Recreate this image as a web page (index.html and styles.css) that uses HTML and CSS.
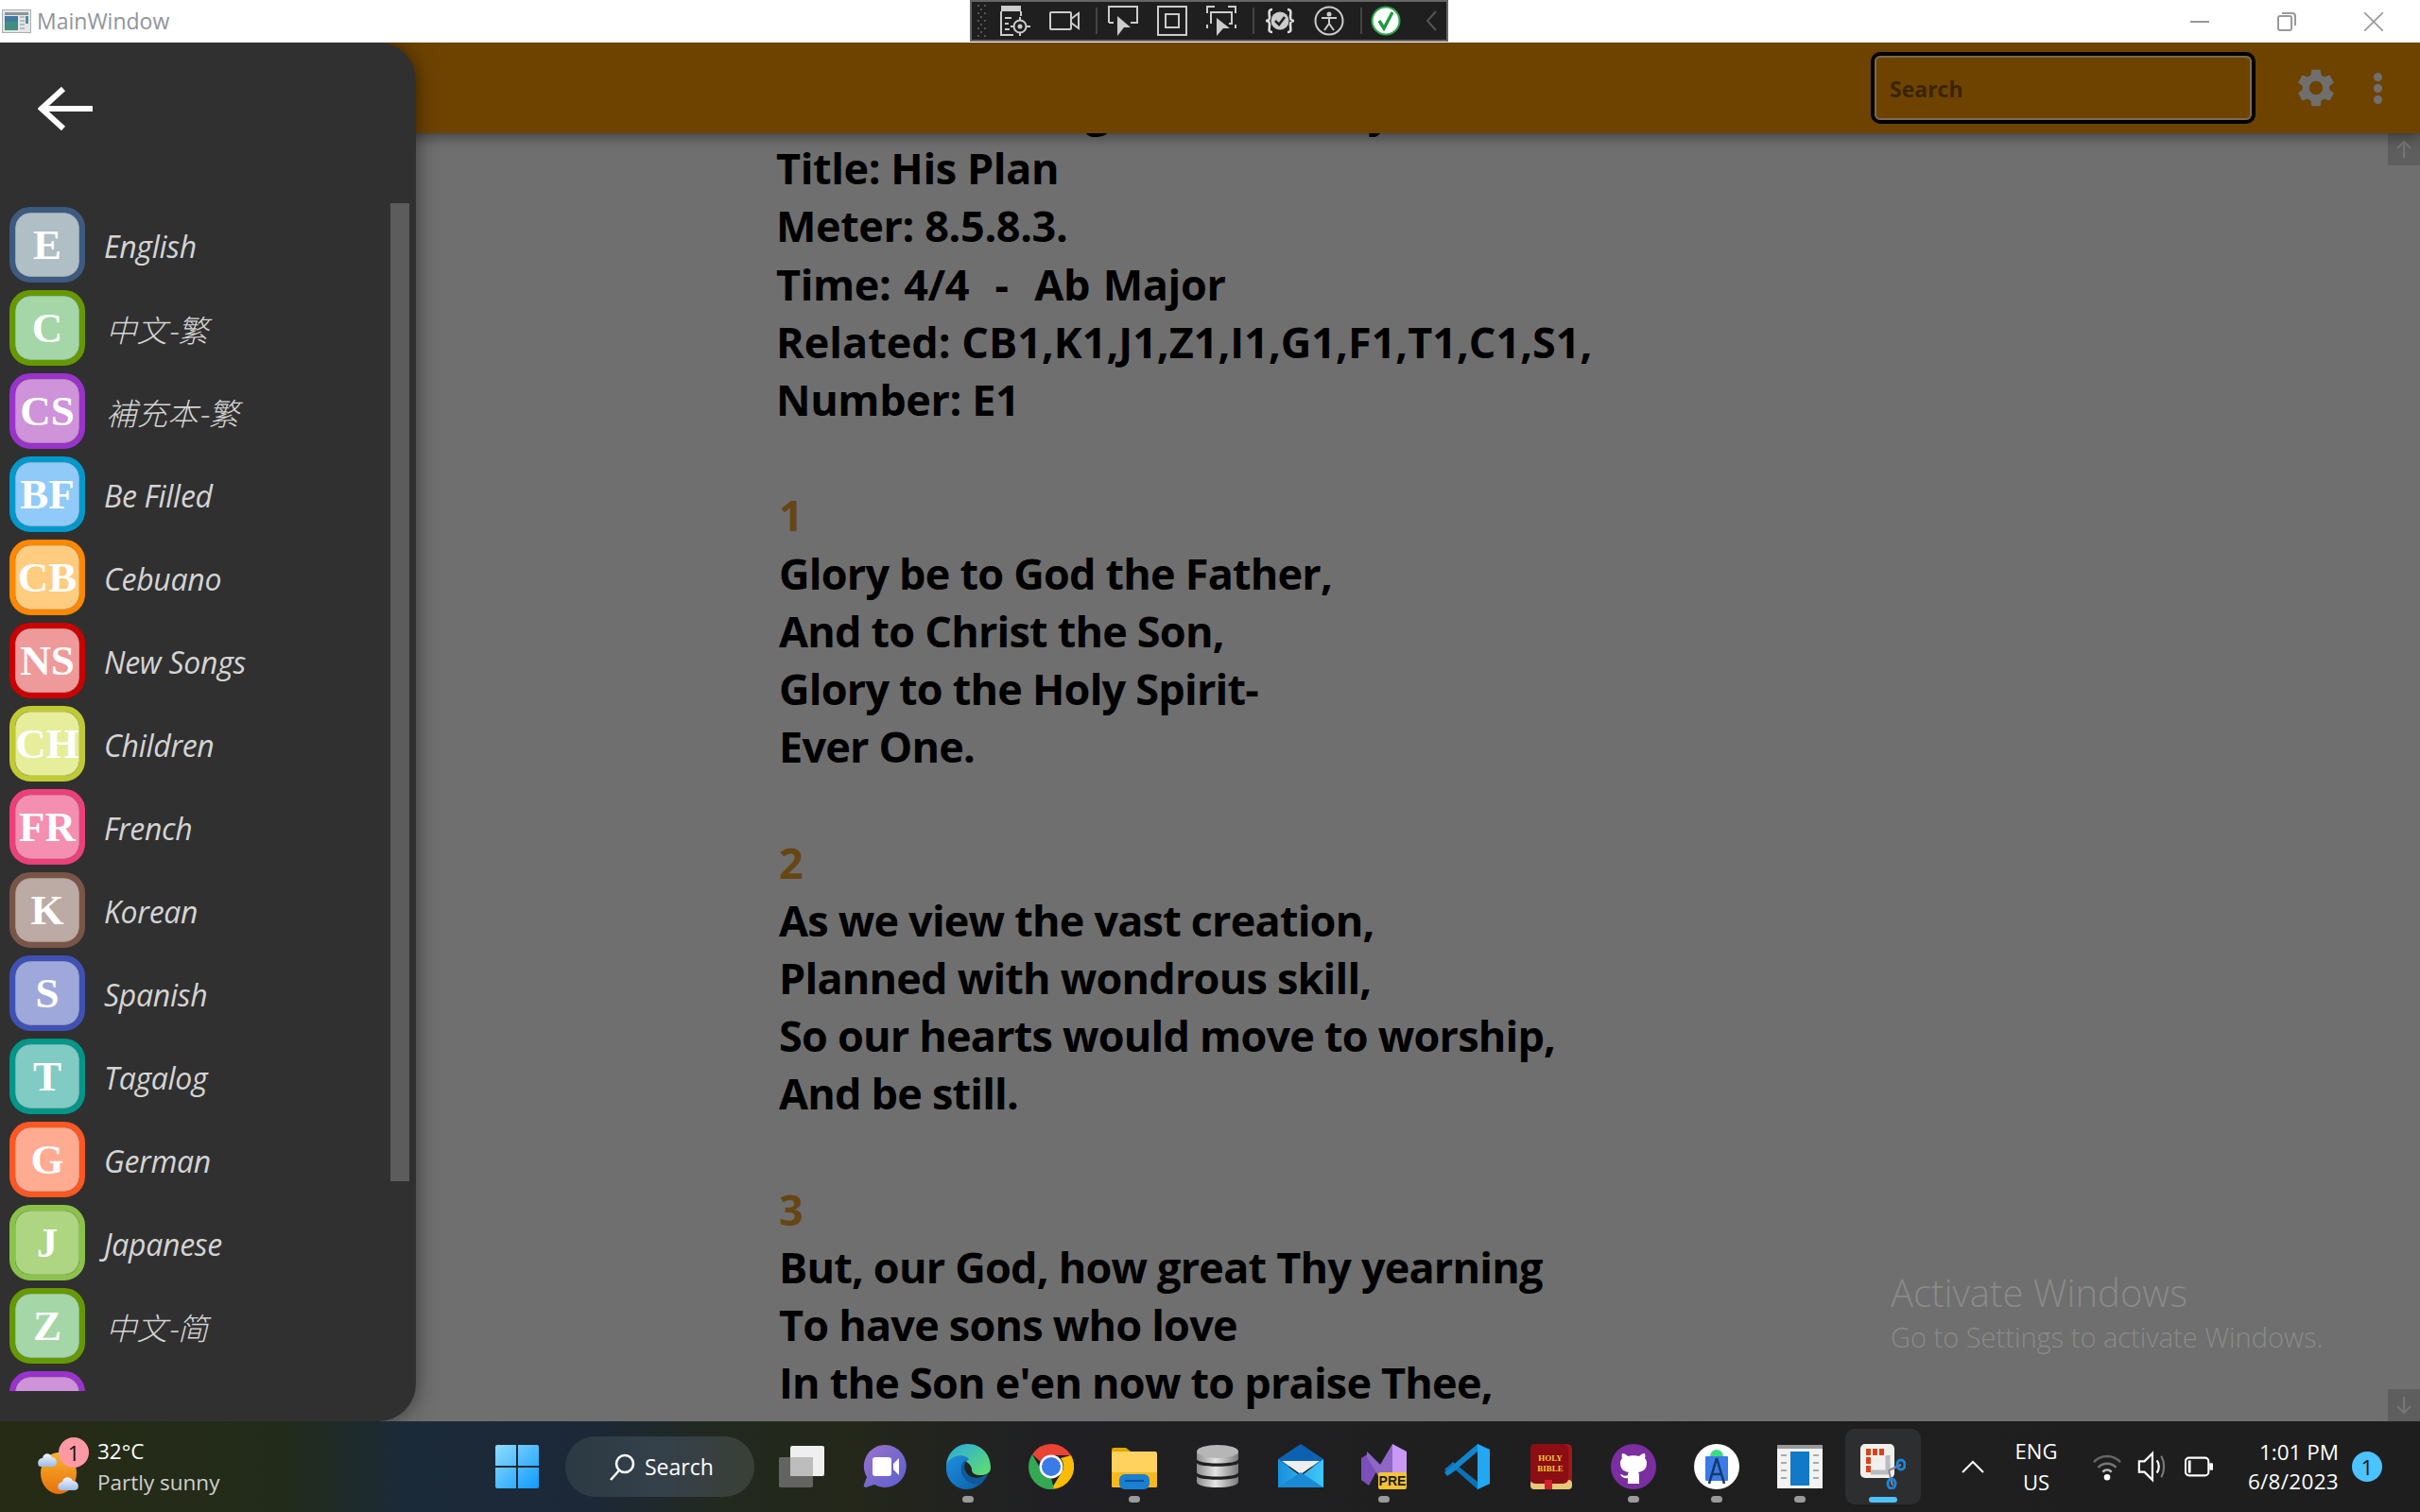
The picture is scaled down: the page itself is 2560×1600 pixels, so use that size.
FILE: index.html
```html
<!DOCTYPE html>
<html lang="en">
<head>
<meta charset="utf-8">
<title>MainWindow</title>
<link rel="stylesheet" href="styles.css">
</head>
<body>
<div class="screen">
  <div class="titlebar">
    <svg class="app-ic" viewBox="0 0 31 25"><rect x=".5" y=".5" width="30" height="24" fill="#e4e6e8" stroke="#a9adb0"/><rect x="3" y="3" width="25" height="3" fill="#8d9499"/><rect x="3" y="7" width="14" height="15" fill="#3f8f7f"/><rect x="3" y="7" width="14" height="6" fill="#3f7aa0"/><rect x="19" y="7" width="5" height="2" fill="#b5bbbf"/><rect x="19" y="11" width="5" height="2" fill="#b5bbbf"/><rect x="19" y="15" width="5" height="2" fill="#b5bbbf"/><rect x="19" y="19" width="5" height="2" fill="#b5bbbf"/><rect x="25" y="7" width="3" height="8" fill="#4f8f8f"/></svg>
    <span class="win-title">MainWindow</span>
    <div class="devbar">
      <svg class="grip" viewBox="0 0 10 34"><g fill="#555"><rect x="0" y="0" width="2" height="2"/><rect x="7" y="0" width="2" height="2"/><rect x="3" y="4" width="2" height="2"/><rect x="0" y="8" width="2" height="2"/><rect x="7" y="8" width="2" height="2"/><rect x="3" y="12" width="2" height="2"/><rect x="0" y="16" width="2" height="2"/><rect x="7" y="16" width="2" height="2"/><rect x="3" y="20" width="2" height="2"/><rect x="0" y="24" width="2" height="2"/><rect x="7" y="24" width="2" height="2"/><rect x="3" y="28" width="2" height="2"/><rect x="0" y="32" width="2" height="2"/><rect x="7" y="32" width="2" height="2"/></g></svg>
      <svg class="tool" viewBox="0 0 32 32" fill="none" stroke="#ccc" stroke-width="2"><rect x="1" y="0" width="21" height="6" fill="#ccc" stroke="none"/><path d="M1 6V31H14M22 6V11"/><path d="M5 13H12M5 19H9M5 25H10"/><circle cx="21" cy="22" r="6.5"/><circle cx="21" cy="22" r="1.5" fill="#ccc"/><path d="M21 12V16M21 28V32M11 22H15M27 22H32"/></svg>
      <svg class="tool" viewBox="0 0 32 32" fill="none" stroke="#ccc" stroke-width="2"><rect x="1" y="7" width="22" height="18" rx="1"/><path d="M23 14L31 8V24L23 18"/></svg>
      <span class="tool-sep"></span>
      <svg class="tool" viewBox="0 0 32 32" fill="none" stroke="#ccc" stroke-width="2"><path d="M1 18V1H31V18H24M1 18H6"/><path d="M10 11L24 23L17 23L10 32Z" fill="#ccc" stroke="none"/></svg>
      <svg class="tool" viewBox="0 0 32 32" fill="none" stroke="#ccc" stroke-width="2"><rect x="1" y="1" width="30" height="30"/><rect x="9" y="9" width="14" height="14"/></svg>
      <svg class="tool" viewBox="0 0 32 32" fill="none" stroke="#ccc" stroke-width="2"><path d="M1 8V1H9M23 1H31V8M1 24V20M31 20V24"/><path d="M5 19V7H27V19H24"/><path d="M11 13L25 24L18 24L11 32Z" fill="#ccc" stroke="none"/></svg>
      <span class="tool-sep"></span>
      <svg class="tool" viewBox="0 0 32 32" fill="none" stroke="#ddd" stroke-width="2.6"><path d="M8 4C3 4 5 9 5 12C5 15 4 16 1 16C4 16 5 17 5 20C5 25 3 28 8 28M24 4C29 4 27 9 27 12C27 15 28 16 31 16C28 16 27 17 27 20C27 25 29 28 24 28"/><circle cx="16" cy="16" r="9.500" fill="#ccc" stroke="none"/><path d="M11 16L15 20L21 12" stroke="#222"/></svg>
      <svg class="tool" viewBox="0 0 32 32" fill="none" stroke="#ccc" stroke-width="2"><circle cx="16" cy="16" r="14.5"/><circle cx="16" cy="9" r="2.5" fill="#ccc" stroke="none"/><path d="M8 13H24M16 13V19L11 26M16 19L21 26"/></svg>
      <span class="tool-sep tool-sep-tight"></span>
      <svg class="tool" viewBox="0 0 32 32" fill="none"><circle cx="16" cy="16" r="14.5" fill="#fff" stroke="#2aa84a" stroke-width="2"/><path d="M9 16L14 24L23 7" stroke="#1f9a3e" stroke-width="3.4"/></svg>
      <svg class="tool-back" viewBox="0 0 12 22" fill="none" stroke="#555" stroke-width="2"><path d="M11 1L2 11L11 21"/></svg>
    </div>
    <div class="win-controls">
      <span class="win-btn"><svg viewBox="0 0 20 20" stroke="#999" stroke-width="2" fill="none"><path d="M0 10H20"/></svg></span>
      <span class="win-btn"><svg viewBox="0 0 20 20" stroke="#999" stroke-width="2" fill="none"><rect x="1" y="4" width="14" height="15" rx="2"/><path d="M5 1H16C18 1 19 2 19 4V14"/></svg></span>
      <span class="win-btn"><svg viewBox="0 0 20 20" stroke="#999" stroke-width="1.6" fill="none"><path d="M0 0L20 20M20 0L0 20"/></svg></span>
    </div>
  </div>

  <div class="app">
    <header class="appbar">
      <div class="search-outer"><div class="search-inner">Search</div></div>
      <svg class="gear" viewBox="0 0 24 24" fill="#6f6f6f"><path d="M19.14 12.94c.04-.3.06-.61.06-.94 0-.32-.02-.64-.07-.94l2.03-1.58c.18-.14.23-.41.12-.61l-1.92-3.32c-.12-.22-.37-.29-.59-.22l-2.39.96c-.5-.38-1.03-.7-1.62-.94l-.36-2.54c-.04-.24-.24-.41-.48-.41h-3.84c-.24 0-.43.17-.47.41l-.36 2.54c-.59.24-1.13.57-1.62.94l-2.39-.96c-.22-.08-.47 0-.59.22L2.74 8.87c-.12.21-.08.47.12.61l2.03 1.58c-.05.3-.09.63-.09.94s.02.64.07.94l-2.03 1.58c-.18.14-.23.41-.12.61l1.92 3.32c.12.22.37.29.59.22l2.39-.96c.5.38 1.03.7 1.62.94l.36 2.54c.05.24.24.41.48.41h3.84c.24 0 .44-.17.47-.41l.36-2.54c.59-.24 1.13-.56 1.62-.94l2.39.96c.22.08.47 0 .59-.22l1.92-3.32c.12-.22.07-.47-.12-.61l-2.01-1.58zM12 15.6c-1.98 0-3.6-1.62-3.6-3.6s1.62-3.6 3.6-3.6 3.6 1.62 3.6 3.6-1.62 3.6-3.6 3.6z"/></svg>
      <div class="kebab"><i></i><i></i><i></i></div>
    </header>

    <div class="reader">
      <div class="page">
        <div class="meta">
          <p>Theme: Praising of the Trinity</p>
          <p>Title: His Plan</p>
          <p>Meter: 8.5.8.3.</p>
          <p class="meta-key">Time: 4/4&nbsp; -&nbsp; Ab Major</p>
          <p class="meta-wide">Related: CB1,K1,J1,Z1,I1,G1,F1,T1,C1,S1,</p>
          <p>Number: E1</p>
        </div>
        <div class="verse">
          <p class="vnum">1</p>
          <p>Glory be to God the Father,</p>
          <p>And to Christ the Son,</p>
          <p>Glory to the Holy Spirit-</p>
          <p>Ever One.</p>
        </div>
        <div class="verse">
          <p class="vnum">2</p>
          <p>As we view the vast creation,</p>
          <p>Planned with wondrous skill,</p>
          <p>So our hearts would move to worship,</p>
          <p>And be still.</p>
        </div>
        <div class="verse">
          <p class="vnum">3</p>
          <p>But, our God, how great Thy yearning</p>
          <p>To have sons who love</p>
          <p>In the Son e'en now to praise Thee,</p>
        </div>
      </div>
      <div class="vscroll">
        <span class="vbtn"><svg viewBox="0 0 20 20" fill="none" stroke="#767676" stroke-width="2"><path d="M10 19V2M3 9L10 2L17 9"/></svg></span>
        <span class="vbtn"><svg viewBox="0 0 20 20" fill="none" stroke="#767676" stroke-width="2"><path d="M10 1V18M3 11L10 18L17 11"/></svg></span>
      </div>
    </div>

    <div class="activate">
      <div class="activate-h">Activate Windows</div>
      <div class="activate-s">Go to Settings to activate Windows.</div>
    </div>

    <aside class="drawer">
      <div class="drawer-top">
        <svg class="back" viewBox="0 0 58 46" fill="none" stroke="#fff" stroke-width="6"><path d="M58 23H5M27 2L4 23L27 44"/></svg>
      </div>
      <div class="drawer-body">
        <ul class="books">
          <li class="book"><span class="badge b-slate">E</span><span class="book-name">English</span></li>
          <li class="book"><span class="badge b-green">C</span><span class="book-name cjk" lang="zh-Hant">中文-繁</span></li>
          <li class="book"><span class="badge b-purple">CS</span><span class="book-name cjk" lang="zh-Hant">補充本-繁</span></li>
          <li class="book"><span class="badge b-blue">BF</span><span class="book-name">Be Filled</span></li>
          <li class="book"><span class="badge b-orange">CB</span><span class="book-name">Cebuano</span></li>
          <li class="book"><span class="badge b-red">NS</span><span class="book-name">New Songs</span></li>
          <li class="book"><span class="badge b-lime">CH</span><span class="book-name">Children</span></li>
          <li class="book"><span class="badge b-pink">FR</span><span class="book-name">French</span></li>
          <li class="book"><span class="badge b-brown">K</span><span class="book-name">Korean</span></li>
          <li class="book"><span class="badge b-indigo">S</span><span class="book-name">Spanish</span></li>
          <li class="book"><span class="badge b-teal">T</span><span class="book-name">Tagalog</span></li>
          <li class="book"><span class="badge b-deep">G</span><span class="book-name">German</span></li>
          <li class="book"><span class="badge b-light">J</span><span class="book-name">Japanese</span></li>
          <li class="book"><span class="badge b-green">Z</span><span class="book-name cjk" lang="zh-Hans">中文-简</span></li>
          <li class="book"><span class="badge b-purple"></span></li>
        </ul>
        <div class="thumb"></div>
      </div>
    </aside>
  </div>

  <footer class="taskbar">
    <div class="weather">
      <div class="w-icon">
        <svg viewBox="0 0 46 50"><defs><linearGradient id="sun" x1="0" y1="0" x2="0" y2="1"><stop offset="0" stop-color="#f6b42a"/><stop offset="1" stop-color="#e8700f"/></linearGradient><linearGradient id="cl" x1="0" y1="0" x2="0" y2="1"><stop offset="0" stop-color="#f2f6ff"/><stop offset="1" stop-color="#9dbbe8"/></linearGradient></defs><ellipse cx="22" cy="28" rx="19" ry="22" fill="url(#sun)"/><path d="M3 21C-1 21-1 12 5 12C6 6 13 6 15 11C21 11 22 21 16 21Z" fill="url(#cl)"/><path d="M25 46C20 46 20 38 26 37C27 31 35 31 37 36C44 36 45 46 39 46Z" fill="url(#cl)"/></svg>
        <span class="w-badge">1</span>
      </div>
      <div class="w-text"><span class="w-temp">32°C</span><span class="w-desc">Partly sunny</span></div>
    </div>
    <svg class="start" viewBox="0 0 46 46"><defs><linearGradient id="win" x1="0" y1="0" x2="1" y2="1"><stop offset="0" stop-color="#8fdcff"/><stop offset="1" stop-color="#0f9bff"/></linearGradient></defs><path fill="url(#win)" d="M2 0H22V22H0V2Q0 0 2 0ZM24 0H44Q46 0 46 2V22H24ZM0 24H22V46H2Q0 46 0 44ZM24 24H46V44Q46 46 44 46H24Z"/></svg>
    <div class="task-search">
      <svg viewBox="0 0 28 30" fill="none" stroke="#fff" stroke-width="2.6"><circle cx="17" cy="12" r="9"/><path d="M11 19L2 29"/></svg>
      <span>Search</span>
    </div>
    <div class="tasks">
      <div class="task"><svg class="t-ic" viewBox="0 0 48 48"><rect x="12" y="2" width="36" height="32" rx="2" fill="#efefef"/><rect x="0" y="14" width="36" height="32" rx="2" fill="#6a6a6a" opacity=".9"/><rect x="12" y="14" width="24" height="20" fill="#bdbdbd"/></svg></div>
      <div class="task"><svg class="t-ic" viewBox="0 0 48 48"><defs><linearGradient id="teams" x1="0" y1="0" x2="1" y2="1"><stop offset="0" stop-color="#9a73c9"/><stop offset="1" stop-color="#5a5fd0"/></linearGradient></defs><path fill="url(#teams)" d="M24 1A22.500 22.500 0 1 1 13 43L4 46Q1 46 2 43L5 35A22.500 22.500 0 0 1 24 1Z"/><rect x="11" y="14" width="20" height="20" rx="3" fill="#fff"/><path d="M33 21L39 15V33L33 27Z" fill="#fff"/></svg></div>
      <div class="task"><svg class="t-ic" viewBox="0 0 48 48"><defs><linearGradient id="edge1" x1="0" y1="0" x2="1" y2="1"><stop offset="0" stop-color="#2aa8e0"/><stop offset="1" stop-color="#62e06a"/></linearGradient><linearGradient id="edge2" x1="0" y1="0" x2="1" y2="1"><stop offset="0" stop-color="#1f8fe0"/><stop offset="1" stop-color="#0b5fa8"/></linearGradient></defs><path fill="url(#edge1)" d="M1 24C1 10 12 0 24 0C38 0 48 11 48 25C48 31 43 33 38 33C31 33 28 31 28 27C28 21 18 14 9 17C5 18 2 21 1 24Z"/><path fill="url(#edge2)" d="M1 24C2 14 18 8 25 16C20 17 16 22 17 28C18 37 28 44 38 42C31 47 26 48 22 48C10 48 0 37 1 24Z"/><path fill="#0f5a9e" d="M25 16C21 18 19 23 21 28C24 35 31 37 38 35C41 34 44 32 46 30C44 35 41 39 38 42C28 44 18 37 17 28C16 22 20 17 25 16Z"/></svg><span class="dot"></span></div>
      <div class="task"><svg class="t-ic" viewBox="0 0 48 48"><path fill="#ea4335" d="M24 0A24 24 0 0 1 45 12H24A12 12 0 0 0 13 19L4 11A24 24 0 0 1 24 0Z"/><path fill="#fbbc05" d="M45 12A24 24 0 0 1 24 48L35 30A12 12 0 0 0 34 15Z"/><path fill="#34a853" d="M4 11L13 27A12 12 0 0 0 24 36L27 48A24 24 0 0 1 4 11Z"/><circle cx="24" cy="24" r="12.500" fill="#fff"/><circle cx="24" cy="24" r="10" fill="#3b7be8"/></svg></div>
      <div class="task"><svg class="t-ic" viewBox="0 0 48 48"><path fill="#e0a800" d="M0 6Q0 4 2 4H15L20 8H40V16H0Z"/><rect x="0" y="8" width="48" height="38" rx="2" fill="#fdd25e"/><path fill="#f5b91f" d="M0 30H48V44Q48 46 46 46H2Q0 46 0 44Z"/><rect x="8" y="32" width="32" height="16" rx="6" fill="#1a7fd0"/><rect x="14" y="38" width="20" height="2" fill="#0b4f90"/></svg><span class="dot"></span></div>
      <div class="task"><svg class="t-ic" viewBox="0 0 48 48"><defs><linearGradient id="db" x1="0" y1="0" x2="1" y2="0"><stop offset="0" stop-color="#8e8e8e"/><stop offset=".45" stop-color="#e4e4e4"/><stop offset="1" stop-color="#7a7a7a"/></linearGradient></defs><path fill="url(#db)" d="M2 8V16C2 22 46 22 46 16V8ZM2 20V30C2 36 46 36 46 30V20C46 25 2 25 2 20ZM2 34V40C2 48 46 48 46 40V34C46 39 2 39 2 34Z"/><ellipse cx="24" cy="8" rx="22" ry="7" fill="#b6b6b6"/></svg></div>
      <div class="task"><svg class="t-ic" viewBox="0 0 48 48"><defs><linearGradient id="m1" x1="0" y1="0" x2="1" y2="0"><stop offset="0" stop-color="#1a8fdc"/><stop offset="1" stop-color="#3fc8f8"/></linearGradient></defs><path fill="#0c62b0" d="M0 16L24 0L48 16V24H0Z"/><path fill="#eee" d="M4 18H44L24 32Z"/><path fill="url(#m1)" d="M0 16L24 34L48 16V46H0Z"/><path fill="#1a8ad6" d="M0 46L24 30L48 46Z"/></svg></div>
      <div class="task"><svg class="t-ic" viewBox="0 0 48 48"><path fill="#7b4fb8" d="M0 15L8 10L20 22L8 44L0 38Z"/><path fill="#8d66c6" d="M6 8L20 22L33 0V34L24 44L6 14Z"/><path fill="#c99af5" d="M33 0L48 8V38L33 44Z"/><rect x="18" y="30" width="30" height="18" rx="2" fill="#f5c430"/><text x="33" y="44" class="pre">PRE</text></svg><span class="dot"></span></div>
      <div class="task"><svg class="t-ic" viewBox="0 0 48 48"><path fill="#0a72b8" d="M35 0L48 6V42L35 48L9 25L3 30L0 27L9 19L35 40Z"/><path fill="#0f85cf" d="M35 0V8L9 30L3 34L0 30Z"/><path fill="#22a7f0" d="M35 0L48 6V42L35 48Z"/></svg></div>
      <div class="task"><svg class="t-ic" viewBox="0 0 48 48"><rect x="3" y="0" width="44" height="44" rx="5" fill="#a01818"/><rect x="3" y="38" width="44" height="10" rx="4" fill="#e8c878"/><rect x="3" y="0" width="40" height="42" rx="5" fill="#8c0d14"/><text x="24" y="18" class="bible">HOLY</text><text x="24" y="29" class="bible">BIBLE</text><rect x="18" y="38" width="8" height="10" fill="#d02030"/></svg></div>
      <div class="task"><svg class="t-ic" viewBox="0 0 48 48"><circle cx="24" cy="24" r="24" fill="#7a2ea0"/><path fill="#fff" d="M18 42V36C13 37 11 34 10 32C12 32 14 35 18 33C18 32 18 31 19 30C13 29 10 26 10 20C10 18 11 16 12 15C11 13 12 11 12 10C15 10 17 12 18 13C21 12 27 12 30 13C31 12 33 10 36 10C36 11 37 13 36 15C37 16 38 18 38 20C38 26 35 29 29 30C30 31 30 33 30 34V42Z"/></svg><span class="dot"></span></div>
      <div class="task"><svg class="t-ic" viewBox="0 0 48 48"><circle cx="24" cy="24" r="24" fill="#fff"/><rect x="12" y="13" width="24" height="26" rx="1" fill="#3b7be8"/><path d="M17 13A7 7 0 0 1 31 13Z" fill="#3ddc84"/><path d="M24 15L16 42M24 15L32 42M18 32H30" stroke="#173a6a" stroke-width="2.6" fill="none"/></svg><span class="dot"></span></div>
      <div class="task"><svg class="t-ic" viewBox="0 0 48 48"><rect x="0" y="1" width="48" height="46" fill="#f2f2f2"/><rect x="0" y="1" width="48" height="4" fill="#9a9a9a"/><rect x="14" y="8" width="20" height="36" fill="#1278c8"/><path d="M4 12H10M4 20H10M4 28H10M4 36H10M38 12H44M38 20H44M38 28H44M38 36H44" stroke="#aaa" stroke-width="2"/></svg><span class="dot"></span></div>
      <div class="task task-on"><svg class="t-ic" viewBox="0 0 48 48"><rect x="0" y="0" width="36" height="36" rx="5" fill="#f2f0ec"/><path d="M6 5H11V12H6ZM13 5H18V12H13ZM20 5H25V12H20ZM6 14H11V21H6ZM6 23H11V30H6Z" fill="#d8431c"/><path d="M29 12V30H11" fill="none" stroke="#b8bcc0" stroke-width="5"/><path d="M30 28L43 22M30 28L34 44" stroke="#889" stroke-width="2" fill="none"/><ellipse cx="43" cy="22" rx="4" ry="5" fill="none" stroke="#1b86d8" stroke-width="3"/><ellipse cx="33" cy="42" rx="4" ry="5" fill="none" stroke="#1b86d8" stroke-width="3"/></svg><span class="dot-on"></span></div>
    </div>
    <div class="tray">
      <svg class="chev" viewBox="0 0 24 14" fill="none" stroke="#fff" stroke-width="2"><path d="M1 13L12 2L23 13"/></svg>
      <div class="lang"><span>ENG</span><span>US</span></div>
      <svg class="wifi" viewBox="0 0 32 34" fill="none" stroke-width="2.6"><path stroke="#666" d="M1 12C9 3 23 3 31 12"/><path stroke="#777" d="M6 18C11 12 21 12 26 18"/><path stroke="#bbb" d="M11 23C14 20 18 20 21 23"/><circle cx="16" cy="29" r="3.500" fill="#fff"/></svg>
      <svg class="spk" viewBox="0 0 32 36" fill="none" stroke-width="2.4"><path stroke="#fff" d="M2 12H8L17 3V33L8 24H2Z"/><path stroke="#fff" d="M22 11C25 15 25 21 22 25"/><path stroke="#777" d="M27 6C31 13 31 23 27 30"/></svg>
      <svg class="batt" viewBox="0 0 32 24" fill="none"><rect x="1" y="2" width="26" height="20" rx="4" stroke="#fff" stroke-width="2.2"/><rect x="4" y="5" width="3" height="14" fill="#fff"/><rect x="28" y="8" width="4" height="8" rx="1" fill="#fff"/></svg>
      <div class="clock"><span>1:01 PM</span><span class="clock-date">6/8/2023</span></div>
      <span class="notif">1</span>
    </div>
  </footer>
</div>
</body>
</html>
```
FILE: styles.css
```css
* { box-sizing: border-box; }
html, body { margin: 0; padding: 0; }
body { font-family: "Open Sans", "Liberation Sans", sans-serif; background: #000; }
p, ul { margin: 0; padding: 0; }
.screen { width: 2560px; height: 1600px; display: flex; flex-direction: column; overflow: hidden; position: relative; }

/* Title bar */
.titlebar { height: 45px; background: #fff; display: flex; align-items: center; position: relative; padding-left: 2px; flex: none; }
.app-ic { width: 31px; height: 25px; margin-right: 6px; }
.win-title { font-size: 23px; color: #8f959a; line-height: 45px; }
.devbar { position: absolute; left: 1026px; top: 0; width: 506px; height: 44px; background: #1f1f1f; border: 2px solid #666; display: flex; align-items: center; padding-left: 6px; gap: 20px; }
.grip { width: 10px; height: 34px; margin-right: -6px; }
.tool { width: 32px; height: 32px; flex: none; }
.tool-sep { width: 2px; height: 28px; background: #444; margin: 0 -9px 0 -3px; flex: none; }
.tool-sep-tight { margin-right: -11px; }
.tool-back { width: 12px; height: 22px; margin-left: 6px; }
.win-controls { margin-left: auto; display: flex; padding-right: 3px; }
.win-btn { width: 92px; height: 45px; display: flex; align-items: center; justify-content: center; }
.win-btn svg { width: 20px; height: 20px; }

/* App */
.app { flex: 1; position: relative; display: flex; flex-direction: column; overflow: hidden; min-height: 0; background: #6f6f6f; }
.appbar { height: 96px; background: #6e4300; display: flex; align-items: center; justify-content: flex-end; padding-right: 39px; flex: none; position: relative; z-index: 2; box-shadow: 0 3px 14px rgba(0, 0, 0, .45); }
.search-outer { width: 407px; height: 76px; border: 4px solid #000; border-radius: 10px; }
.search-inner { height: 100%; border: 2px solid #7b6a4f; border-radius: 6px; padding: 2px 0 0 14px; font-size: 23px; font-weight: 700; color: #3a2400; display: flex; align-items: center; }
.gear { width: 48px; height: 48px; margin-left: 40px; }
.kebab { width: 10px; margin-left: 37px; display: flex; flex-direction: column; gap: 3px; }
.kebab i { display: block; width: 9px; height: 9px; border-radius: 50%; background: #6f6f6f; }

.reader { flex: 1; display: flex; min-height: 0; }
.page { flex: 1; padding-left: 821px; margin-top: -55px; color: #000; font-size: 45px; font-weight: 700; line-height: 61.2px; white-space: nowrap; letter-spacing: -0.4px; }
.meta { margin-bottom: 61.2px; }
.meta-key { word-spacing: 2.5px; }
.meta-wide { letter-spacing: 0; }
.verse { padding-left: 3px; margin-bottom: 61.2px; letter-spacing: -0.8px; }
.vnum { color: #664614; }
.vscroll { width: 34px; display: flex; flex-direction: column; justify-content: space-between; flex: none; }
.vbtn { height: 34px; background: #5e5e5e; display: flex; align-items: center; justify-content: center; }
.vbtn svg { width: 20px; height: 20px; }

.activate { position: absolute; left: 2000px; top: 1297px; color: #8a8a8a; font-weight: 300; }
.activate-h { font-size: 40px; line-height: 52px; }
.activate-s { font-size: 29px; line-height: 42px; }

/* Drawer */
.drawer { position: absolute; left: 0; top: 0; bottom: 0; width: 440px; background: #303030; border-radius: 0 40px 40px 0; z-index: 3; display: flex; flex-direction: column; box-shadow: 0 0 22px rgba(0, 0, 0, .5); }
.drawer-top { height: 170px; padding: 47px 0 0 40px; flex: none; }
.back { width: 58px; height: 46px; display: block; }
.drawer-body { flex: 1; display: flex; margin-bottom: 32px; min-height: 0; overflow: hidden; }
.books { list-style: none; width: 413px; padding: 4px 0 0 10px; display: flex; flex-direction: column; gap: 8px; }
.book { display: flex; align-items: center; height: 80px; flex: none; }
.badge { width: 80px; height: 80px; flex: none; border: 6px solid; border-radius: 22px; font-family: "Liberation Serif", serif; font-weight: 700; font-size: 45px; color: #fff; display: flex; align-items: center; justify-content: center; box-shadow: inset 0 0 0 1px rgba(0, 0, 0, .12); background-clip: padding-box; }
.book-name { margin-left: 20px; padding-top: 2px; font-size: 32px; font-style: italic; font-weight: 400; color: #d4d4d4; letter-spacing: -0.3px; }
.cjk { font-family: "Noto Sans CJK TC", sans-serif; font-size: 32.500px; font-weight: 300; margin-left: 22px; padding-top: 0; letter-spacing: 0; }
.thumb { width: 20px; height: 1035px; background: #5c5c5c; flex: none; }
.b-slate { background-color: #b0bec5; border-color: #3d5a80; }
.b-green { background-color: #a5d6a7; border-color: #669900; }
.b-purple { background-color: #ce93d8; border-color: #9933cc; }
.b-blue { background-color: #90caf9; border-color: #0099cc; }
.b-orange { background-color: #ffcc80; border-color: #ff8800; }
.b-red { background-color: #ef9a9a; border-color: #cc0000; }
.b-lime { background-color: #e6ee9c; border-color: #c0ca33; }
.b-pink { background-color: #f48fb1; border-color: #ec407a; }
.b-brown { background-color: #bcaaa4; border-color: #795548; }
.b-indigo { background-color: #9fa8da; border-color: #3f51b5; }
.b-teal { background-color: #80cbc4; border-color: #009688; }
.b-deep { background-color: #ffab91; border-color: #ff5722; }
.b-light { background-color: #aed581; border-color: #8bc34a; }

/* Taskbar */
.taskbar { height: 96px; flex: none; display: flex; align-items: center; color: #fff; background: linear-gradient(90deg, #262b15 0, #222b1a 300px, #1b2a38 430px, #1c2838 620px, #22291f 760px, #24271a 900px, #202024 1100px, #1f1f1f 1600px, #1e1e1e 2560px); }
.weather { width: 524px; padding-left: 40px; display: flex; align-items: center; flex: none; }
.w-icon { width: 63px; height: 58px; position: relative; flex: none; }
.w-icon svg { width: 46px; height: 50px; position: absolute; left: 0; top: 8px; }
.w-badge { position: absolute; left: 22px; top: -2px; width: 32px; height: 32px; border-radius: 50%; background: #ff99a4; color: #111; font-size: 22px; display: flex; align-items: center; justify-content: center; }
.w-text { display: flex; flex-direction: column; font-size: 22.500px; line-height: 33px; }
.w-desc { color: #cfcfcf; }
.start { width: 46px; height: 46px; flex: none; }
.task-search { width: 200px; height: 64px; margin: 0 6px 0 28px; border-radius: 32px; background: linear-gradient(90deg, #2c3a44, #34404a 50%, #3a4036); display: flex; align-items: center; padding-left: 46px; gap: 10px; font-size: 23px; flex: none; }
.task-search svg { width: 28px; height: 30px; }
.tasks { display: flex; flex: none; }
.task { width: 80px; height: 80px; margin: 8px 4px; padding-top: 16px; border-radius: 10px; display: flex; flex-direction: column; align-items: center; }
.t-ic { width: 48px; height: 48px; flex: none; }
.dot { width: 12px; height: 7px; border-radius: 4px; background: #9a9a9a; margin-top: 7px; }
.task-on { background: #2d2e30; }
.dot-on { width: 30px; height: 6px; border-radius: 3px; background: #4cc2ff; margin-top: 8px; }
.pre { font: 700 14px "Liberation Sans", sans-serif; fill: #1c1c1c; text-anchor: middle; }
.bible { font: 700 9px "Liberation Serif", serif; fill: #f0c92e; text-anchor: middle; }
.tray { flex: 1; display: flex; align-items: center; padding-right: 40px; }
.chev { width: 24px; height: 14px; margin-left: 39px; }
.lang { width: 60px; margin-left: 25px; display: flex; flex-direction: column; align-items: center; font-size: 22px; line-height: 33px; }
.wifi { width: 30px; height: 34px; margin-left: 30px; }
.spk { width: 30px; height: 34px; margin-left: 17px; }
.batt { width: 30px; height: 24px; margin-left: 20px; }
.clock { margin-left: auto; display: flex; flex-direction: column; align-items: flex-end; font-size: 22.500px; line-height: 31px; }
.clock-date { letter-spacing: 0.3px; }
.notif { width: 32px; height: 32px; margin-left: 14px; border-radius: 50%; background: #4cc2ff; color: #111; font-size: 22px; display: flex; align-items: center; justify-content: center; }
```
